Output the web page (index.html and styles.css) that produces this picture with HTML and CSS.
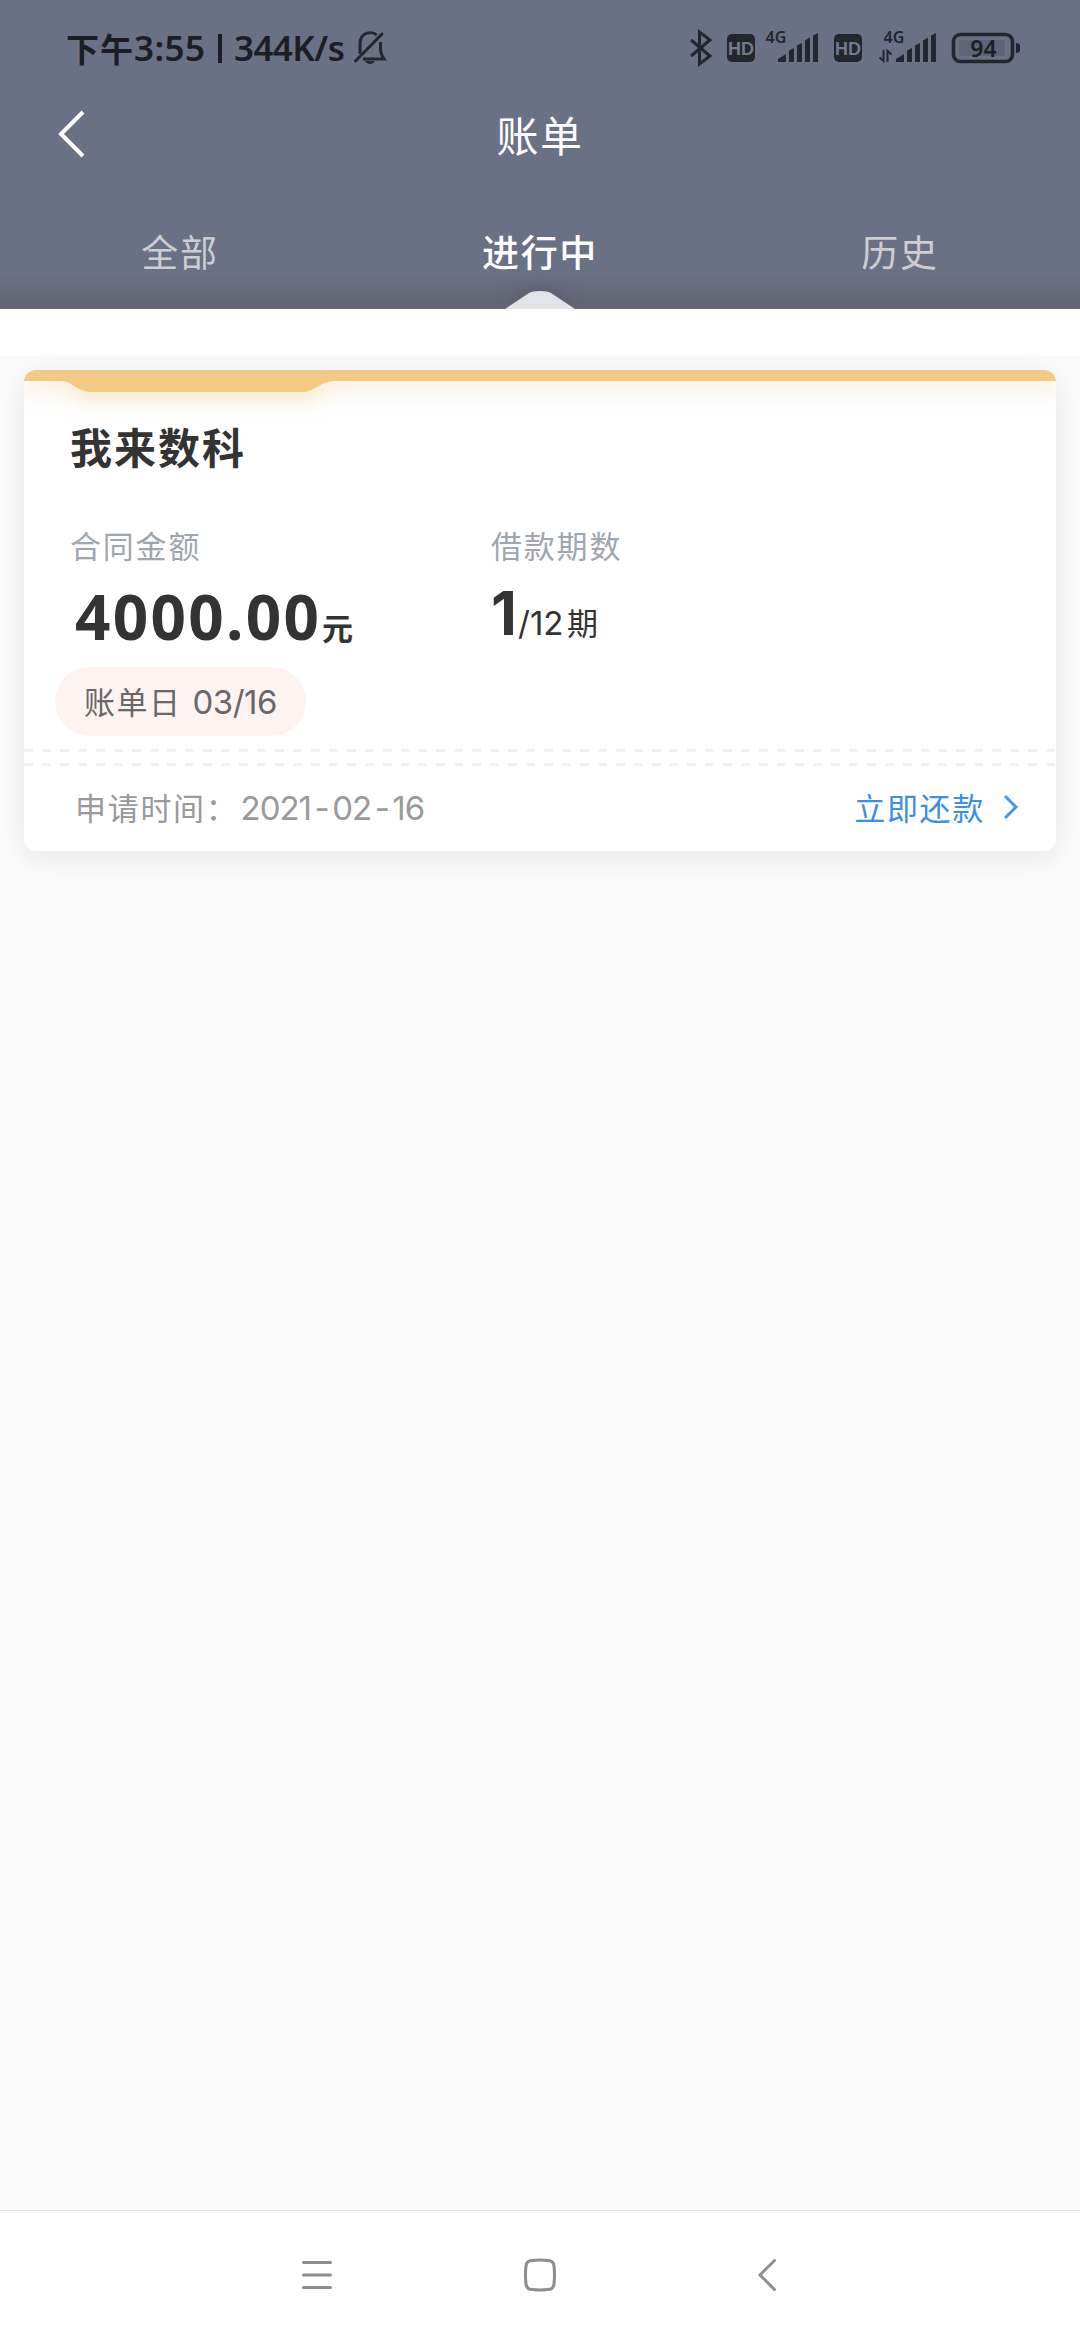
FILE: index.html
```html
<!DOCTYPE html>
<html lang="zh-CN">
<head>
<meta charset="utf-8">
<title>账单</title>
<link rel="stylesheet" href="styles.css">
</head>
<body>
<header class="header">
  <div class="status">
    <div class="status-left">
      <span class="cn">下午</span><span class="time">3:55</span><span class="bar"></span><span class="speed">344K/s</span>
      <svg class="bell" width="34" height="34" viewBox="0 0 34 34" fill="none" stroke="#22262e" stroke-width="3"><path d="M2.5 30 29 3" stroke-linecap="round"/><path d="M7 23V13C7 0 20 0 23.5 4M27.500 11V17C27.500 22 28 24 31 28H10"/><path d="M12 30H22C20 34 14 34 12 30Z" fill="#22262e" stroke="none"/></svg>
    </div>
    <svg class="status-icons" width="332" height="60" viewBox="689 18 332 60" fill="#22262e">
      <path d="M691 40 710 56 699.500 64V32L710 40 691 56" fill="none" stroke="#22262e" stroke-width="3"/>
      <rect x="727" y="34" width="28" height="28" rx="5"/><text x="741" y="55" class="hd">HD</text>
      <text x="776" y="43" class="net">4G</text>
      <path id="sig" d="M778 62V59L786 54V62ZM789 62V50.500L794 48V62ZM797 62V45.500L802 43V62ZM805 62V40.500L810 37.500V62ZM813 62V35.500L818 33V62Z"/>
      <rect x="834" y="34" width="28" height="28" rx="5"/><text x="848" y="55" class="hd">HD</text>
      <text x="894" y="43" class="net">4G</text>
      <path d="M879.500 57.500 883.500 61V50M891.500 54.500 887.500 51V62" fill="none" stroke="#22262e" stroke-width="2"/>
      <use href="#sig" x="118"/>
      <rect x="959" y="40" width="46" height="16" rx="2" fill="#5f6576"/>
      <rect x="953.500" y="34.500" width="59" height="27" rx="7" fill="none" stroke="#22262e" stroke-width="3.600"/>
      <path d="M1016 43Q1020 43 1020 46V50Q1020 53 1016 53Z"/>
      <text x="983.500" y="56.500" class="pct">94</text>
    </svg>
  </div>
  <div class="titlebar">
    <svg class="back" width="30" height="50" viewBox="0 0 30 50" fill="none" stroke="#fff" stroke-width="4"><path d="M26 3 4 25 26 47"/></svg>
    <h1 class="title">账单</h1>
  </div>
  <nav class="tabs">
    <span class="tab">全部</span>
    <span class="tab active">进行中</span>
    <span class="tab">历史</span>
  </nav>
  <svg class="pointer" width="72" height="18" viewBox="0 0 72 18"><path d="M1 18 25 2Q28 0 36 0T47 2L71 18Z" fill="#e3e4e8"/></svg>
</header>
<div class="strip"></div>
<main class="content">
  <section class="card">
    <svg class="ribbon" width="1032" height="60" viewBox="0 0 1032 60"><path d="M0 0H1032V11H312C294 11 294 22 276 22H70C50 22 50 11 36 11H0Z"/></svg>
    <h2 class="name">我来数科</h2>
    <div class="facts">
      <div class="fact">
        <div class="label">合同金额</div>
        <div class="amount"><span class="num">4000.00</span><span class="unit">元</span></div>
      </div>
      <div class="fact">
        <div class="label">借款期数</div>
        <div class="term"><span class="one">1</span><span class="of">/12</span><span>期</span></div>
      </div>
    </div>
    <div class="pill"><span>账单日</span><span class="pill-num">03/16</span></div>
    <div class="dashes"></div>
    <div class="foot">
      <div class="applied"><span>申请时间：</span><span class="date">2021<i>-</i>02<i>-</i>16</span></div>
      <div class="pay"><span>立即还款</span><svg width="18" height="26" viewBox="0 0 18 26" fill="none" stroke="#4595ec" stroke-width="3"><path d="M3 2 14 13 3 24"/></svg></div>
    </div>
  </section>
</main>
<footer class="navbar">
  <svg width="36" height="36" viewBox="0 0 36 36" fill="none" stroke="#8e8e8e" stroke-width="3" stroke-linecap="round"><path d="M4.500 5.500H31.500M4.500 18H31.500M4.500 30.500H31.500"/></svg>
  <svg width="36" height="36" viewBox="0 0 36 36" fill="none" stroke="#8e8e8e" stroke-width="3"><path d="M10 3.500Q18 2.500 26 3.500 31.500 3.500 32 9 33 18 32 27 31.500 32.500 26 32.500 18 33.500 10 32.500 4.500 32.500 4 27 3 18 4 9 4.500 3.500 10 3.500Z"/></svg>
  <svg width="36" height="36" viewBox="0 0 36 36" fill="none" stroke="#8e8e8e" stroke-width="3" stroke-linecap="round"><path d="M29.500 3.500 15 18 29.500 32.500"/></svg>
</footer>
</body>
</html>
```
FILE: styles.css
```css
* { box-sizing: border-box; }
body {
  margin: 0;
  width: 1080px;
  height: 2340px;
  display: flex;
  flex-direction: column;
  background: #fafafa;
  font-family: "Noto Sans CJK SC", sans-serif;
  color: #333;
}
svg { display: block; }
h1, h2 { margin: 0; }

.header {
  position: relative;
  height: 309px;
  background: linear-gradient(#697184 0, #697184 275px, #656776 300px, #656571 309px);
  overflow: hidden;
}
.status {
  height: 96px;
  padding: 0 59px 0 66px;
  display: flex;
  align-items: center;
  justify-content: space-between;
  color: #1b1e25;
}
.status-left {
  display: flex;
  align-items: center;
  height: 96px;
  font-family: "Noto Sans", "Noto Sans CJK SC", sans-serif;
  font-size: 35px;
  font-weight: 600;
  line-height: 40px;
}
.cn { width: 68px; font-family: "Noto Sans CJK SC", sans-serif; font-size: 33px; font-weight: 700; letter-spacing: 1px; }
.time { width: 84px; letter-spacing: .4px; }
.bar { width: 4px; height: 29px; margin-right: 12px; background: #1b1e25; }
.speed { width: 119px; letter-spacing: -.6px; }
.bell { flex: none; }
.hd { font: 700 18px "Liberation Sans", sans-serif; fill: #747b8b; text-anchor: middle; }
.net { font: 600 16px "Noto Sans", sans-serif; text-anchor: middle; }
.pct { font: 600 23px "Noto Sans", sans-serif; text-anchor: middle; fill: #1b1e25; }

.titlebar { height: 80px; display: grid; grid-template-columns: 120px 1fr 120px; align-items: center; }
.back { margin-left: 57px; margin-top: -5px; }
.title { color: #fff; text-align: center; font-size: 42px; font-weight: 400; line-height: 60px; letter-spacing: 1.500px; margin-top: -4px; }
.tabs { display: grid; grid-template-columns: repeat(3, 1fr); height: 133px; padding-top: 48px; }
.tab { text-align: center; font-size: 37px; line-height: 54px; letter-spacing: 1.700px; color: #cdced1; }
.tab.active { color: #fff; font-weight: 500; }
.pointer { position: absolute; left: 504px; bottom: 0; filter: drop-shadow(0 0 10px rgba(70, 65, 75, .5)); }

.strip { height: 47px; background: #fff; }
.content { flex: 1; padding: 14px 24px; }
.card {
  position: relative;
  height: 481px;
  border-radius: 12px;
  background: #fff;
  box-shadow: 0 6px 28px rgba(0, 0, 0, .08);
  display: flex;
  flex-direction: column;
}
.ribbon { position: absolute; left: 0; top: 0; border-radius: 12px 12px 0 0; fill: #f2ca85; }
.ribbon path { filter: drop-shadow(0 8px 10px rgba(235, 205, 145, .5)); }
.name { margin: 46px 0 0 46px; font-size: 42px; line-height: 60px; font-weight: 700; letter-spacing: 2px; position: relative; }
.facts { display: grid; grid-template-columns: 421px 1fr; height: 191px; padding: 47px 0 0 46px; }
.label { font-size: 31px; line-height: 44px; color: #9fa6ae; letter-spacing: 1.800px; }
.amount, .term { height: 74px; margin-top: 12px; display: flex; align-items: baseline; line-height: 74px; }
.num { width: 246px; padding-left: 5px; font-family: "Noto Sans", sans-serif; font-size: 62px; font-weight: 700; letter-spacing: 2.300px; }
.unit { margin-left: 6px; font-size: 31px; font-weight: 700; }
.term { font-size: 31px; margin-top: 9px; }
.one { width: 27px; font-family: Inter, sans-serif; font-size: 60px; font-weight: 700; }
.of { width: 49px; font-family: Inter, sans-serif; font-size: 33px; letter-spacing: 0; }
.pill {
  margin: 0 0 0 31px;
  width: 251px;
  height: 69px;
  padding-left: 29px;
  border-radius: 35px;
  background: #fff3f1;
  color: #686868;
  display: flex;
  align-items: baseline;
  font-size: 31px;
  line-height: 67px;
  letter-spacing: 1.500px;
}
.pill-num { margin-left: 11px; font-family: Inter, sans-serif; font-size: 33px; letter-spacing: -.500px; }
.dashes {
  margin-top: 13px;
  height: 17px;
  background:
    repeating-linear-gradient(90deg, #f1f1f1 0 9px, transparent 9px 17.930px) 0 0 / 100% 3px no-repeat,
    repeating-linear-gradient(90deg, #f1f1f1 0 9px, transparent 9px 17.930px) 0 100% / 100% 3px no-repeat;
}
.foot { display: flex; justify-content: space-between; padding: 15px 36px 0 51px; font-size: 31px; line-height: 50px; letter-spacing: 1.700px; }
.applied { display: flex; align-items: baseline; color: #9a9a9a; padding-top: 1px; }
.date { margin-left: 2px; font-family: Inter, sans-serif; font-size: 33px; letter-spacing: -1px; }
.date i { font-style: normal; margin: 0 3.500px; }
.pay { display: flex; align-items: center; color: #3d8fe6; gap: 17px; }

.navbar {
  height: 130px;
  padding-bottom: 1px;
  border-top: 1px solid #e2e2e2;
  background: #fff;
  display: flex;
  justify-content: center;
  align-items: center;
  gap: 187px;
}
```
